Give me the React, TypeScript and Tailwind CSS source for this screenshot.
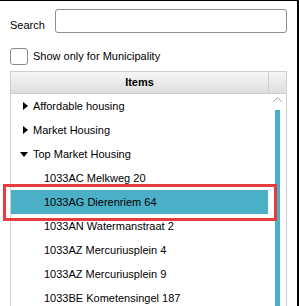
import React from "react";

const RightTri = () => (
  <svg width="5" height="8" viewBox="0 0 5 8" className="shrink-0">
    <path d="M0 0 L5 4 L0 8 Z" fill="#000" />
  </svg>
);
const DownTri = () => (
  <svg width="8" height="5" viewBox="0 0 8 5" className="shrink-0">
    <path d="M0 0 L8 0 L4 5 Z" fill="#000" />
  </svg>
);

type Row = { label: string; level: 0 | 1; icon?: "right" | "down"; selected?: boolean };

const rows: Row[] = [
  { label: "Affordable housing", level: 0, icon: "right" },
  { label: "Market Housing", level: 0, icon: "right" },
  { label: "Top Market Housing", level: 0, icon: "down" },
  { label: "1033AC Melkweg 20", level: 1 },
  { label: "1033AG Dierenriem 64", level: 1, selected: true },
  { label: "1033AN Watermanstraat 2", level: 1 },
  { label: "1033AZ Mercuriusplein 4", level: 1 },
  { label: "1033AZ Mercuriusplein 9", level: 1 },
  { label: "1033BE Kometensingel 187", level: 1 },
  { label: "1033BE Kometensingel 189", level: 1 },
];

export default function App() {
  return (
    <div className="relative w-[299px] h-[306px] overflow-hidden bg-white border-t border-r-2 border-black font-['Liberation_Sans',Arial,sans-serif] text-[11px] text-black">
      {/* Search row */}
      <div className="flex items-end pl-[10px] pt-[8px]">
        <span className="w-[45px] leading-[13px] mb-[1px]">Search</span>
        <div className="w-[232px] h-[24px] rounded-[3px] border border-[#8e8e8e] bg-white" />
      </div>

      {/* Checkbox row */}
      <div className="flex items-center pl-[10px] mt-[15px]">
        <div className="w-[18px] h-[17px] rounded-[3px] border border-[#8a8a8a] bg-white" />
        <span className="ml-[5px] leading-[13px]">Show only for Municipality</span>
      </div>

      {/* Table */}
      <div className="ml-[10px] mt-[6px] w-[277px]">
        <div className="flex h-[23px] border border-[#cfcfcf] bg-gradient-to-b from-[#f6f6f6] to-[#dedede]">
          <div className="flex-1 flex items-center justify-center font-bold">Items</div>
          <div className="w-[18px] border-l border-[#cfcfcf]" />
        </div>
        <div className="flex border-l border-r border-[#cfcfcf] h-[220px]">
          <div className="flex-1 flex flex-col">
            {rows.map((r, i) => (
              <div
                key={i}
                className={
                  "h-[24px] shrink-0 flex items-center " +
                  (r.selected ? "bg-[#4aafc7]" : "")
                }
              >
                {r.level === 0 ? (
                  <div className="flex items-center">
                    <div className="w-[21px] flex justify-end pr-[4px]">
                      {r.icon === "right" ? <RightTri /> : <DownTri />}
                    </div>
                    <span className="ml-[1px]">{r.label}</span>
                  </div>
                ) : (
                  <span className="ml-[33px]">{r.label}</span>
                )}
              </div>
            ))}
          </div>
          <div className="w-[18px] flex flex-col items-center pt-[3px]">
            <svg width="9" height="5" viewBox="0 0 9 5">
              <path d="M0.5 4.5 L4.5 0.8 L8.5 4.5" fill="none" stroke="#9a9a9a" strokeWidth="1" />
            </svg>
            <div className="mt-[8px] w-[5px] flex-1 bg-[#4aafc7]" />
          </div>
        </div>
      </div>

      {/* Red annotation */}
      <div className="absolute left-[3px] top-[183px] w-[274px] h-[37px] border-[3px] border-[#e43c3f]" />
    </div>
  );
}
